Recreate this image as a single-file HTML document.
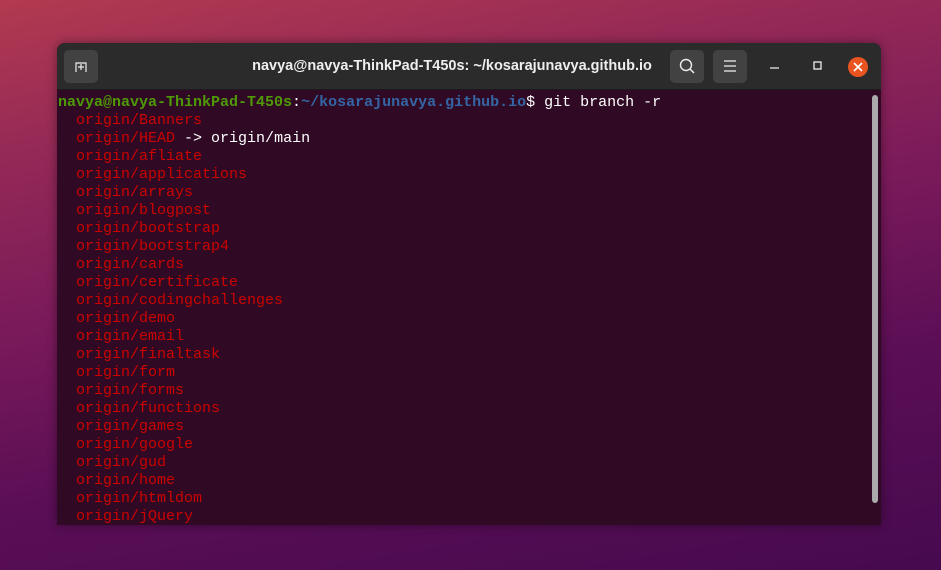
<!DOCTYPE html>
<html><head><meta charset="utf-8"><style>
*{margin:0;padding:0;box-sizing:border-box}
body{width:941px;height:570px;overflow:hidden;position:relative;
background:linear-gradient(170deg,#b23a50 0%,#962a56 20%,#7a1a5a 45%,#5a0e55 70%,#470a4e 100%);font-family:"Liberation Sans",sans-serif}
.win{position:absolute;left:57px;top:43px;width:824px;height:482px;border-radius:8px 8px 0 0;overflow:hidden;background:#300a24;box-shadow:0 0 10px rgba(0,0,0,.4)}
.tb{height:47px;background:#2b2b2b;position:relative;border-bottom:1px solid #1c1c1c}
.btn{position:absolute;top:7px;width:34px;height:33px;background:#424242;border-radius:5px}
.title{position:absolute;left:0;right:0;top:15px;text-align:center;color:#eee;font-weight:bold;font-size:14.5px;padding-right:34px}
.term{position:absolute;top:51px;left:1px;font-family:"Liberation Mono",monospace;font-size:15px;line-height:18px;color:#fff;white-space:pre}
.g{color:#4e9a06;font-weight:bold}.b{color:#3465a4;font-weight:bold}.r{color:#cc0000}
.sb{position:absolute;left:815px;top:52px;width:6px;height:408px;background:#aaa;border-radius:3px}
</style></head><body>
<div class="win">
<div class="tb">
<div class="btn" style="left:7px"><svg width="34" height="33"><path d="M12 22V13h10v9M14 17h6M17 14v6" stroke="#eee" fill="none" stroke-width="1.2"/></svg></div>
<div class="title">navya@navya-ThinkPad-T450s: ~/kosarajunavya.github.io</div>
<div class="btn" style="left:613px"><svg width="34" height="33"><circle cx="16" cy="15" r="5.5" stroke="#eee" fill="none" stroke-width="1.4"/><path d="M20 19l4 4" stroke="#eee" stroke-width="1.5"/></svg></div>
<div class="btn" style="left:656px"><svg width="34" height="33"><path d="M11 11h12M11 16h12M11 21h12" stroke="#eee" stroke-width="1.2"/></svg></div>
<svg style="position:absolute;left:706px;top:12px" width="110" height="24"><path d="M7 13h9" stroke="#eee" stroke-width="1.3"/><rect x="51" y="7" width="7" height="7" stroke="#eee" fill="none" stroke-width="1.3"/><circle cx="95" cy="12" r="10" fill="#e95420"/><path d="M91 8l8 8M99 8l-8 8" stroke="#fff" stroke-width="1.6"/></svg>
</div>
<div class="term"><span class="g">navya@navya-ThinkPad-T450s</span>:<span class="b">~/kosarajunavya.github.io</span>$ git branch -r
  <span class="r">origin/Banners</span>
  <span class="r">origin/HEAD</span> -&gt; origin/main
  <span class="r">origin/afliate</span>
  <span class="r">origin/applications</span>
  <span class="r">origin/arrays</span>
  <span class="r">origin/blogpost</span>
  <span class="r">origin/bootstrap</span>
  <span class="r">origin/bootstrap4</span>
  <span class="r">origin/cards</span>
  <span class="r">origin/certificate</span>
  <span class="r">origin/codingchallenges</span>
  <span class="r">origin/demo</span>
  <span class="r">origin/email</span>
  <span class="r">origin/finaltask</span>
  <span class="r">origin/form</span>
  <span class="r">origin/forms</span>
  <span class="r">origin/functions</span>
  <span class="r">origin/games</span>
  <span class="r">origin/google</span>
  <span class="r">origin/gud</span>
  <span class="r">origin/home</span>
  <span class="r">origin/htmldom</span>
  <span class="r">origin/jQuery</span></div>
<div class="sb"></div>
</div>
</body></html>
